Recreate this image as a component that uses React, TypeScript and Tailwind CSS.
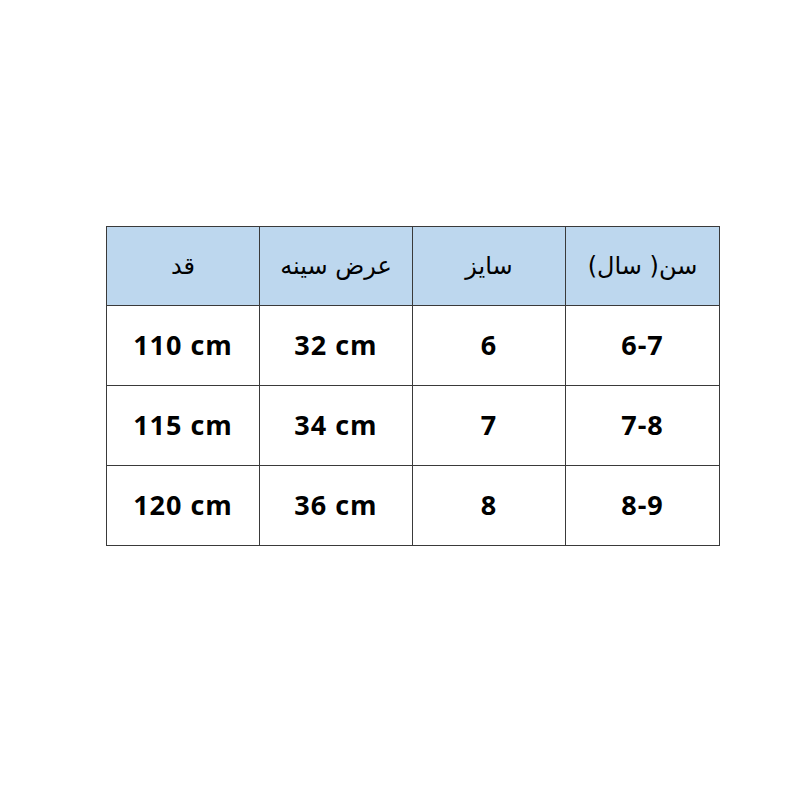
const headers = ["قد", "عرض سينه", "سایز", "سن( سال)"];

const rows = [
  ["110 cm", "32 cm", "6", "6-7"],
  ["115 cm", "34 cm", "7", "7-8"],
  ["120 cm", "36 cm", "8", "8-9"],
];

export default function App() {
  return (
    <div className="w-[800px] h-[800px] bg-white pt-[226px] pl-[106px]">
      <table className="border-collapse border border-[#3a3a3a] text-black">
        <thead>
          <tr className="bg-[#bdd7ee] h-[79px]">
            {headers.map((h, j) => (
              <th
                key={h}
                dir="rtl"
                className={`${j === 3 ? "w-[154px]" : "w-[153px]"} border border-[#3a3a3a] text-center font-normal text-[24px] font-['DejaVu_Sans',sans-serif]`}
              >
                {h}
              </th>
            ))}
          </tr>
        </thead>
        <tbody>
          {rows.map((r, i) => (
            <tr key={i} className="h-[80px]">
              {r.map((c, j) => (
                <td
                  key={j}
                  className="border border-[#3a3a3a] text-center font-bold text-[27px] tracking-[1px] font-['Open_Sans',sans-serif]"
                >
                  {c}
                </td>
              ))}
            </tr>
          ))}
        </tbody>
      </table>
    </div>
  );
}
